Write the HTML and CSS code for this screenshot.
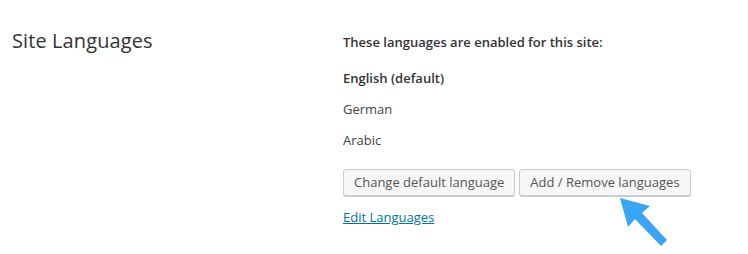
FILE: index.html
```html
<!DOCTYPE html>
<html>
<head>
<meta charset="utf-8">
<link rel="stylesheet" href="styles.css">
</head>
<body>
<div class="row">
  <h2 class="label">Site Languages</h2>
  <div class="field">
    <p class="intro">These languages are enabled for this site:</p>
    <ul class="langs">
      <li class="default">English (default)</li>
      <li>German</li>
      <li>Arabic</li>
    </ul>
    <div class="buttons">
      <button class="btn">Change default language</button>
      <button class="btn">Add / Remove languages</button>
    </div>
    <a class="edit" href="#">Edit Languages</a>
  </div>
</div>
<svg class="arrow" width="60" height="60" viewBox="0 0 60 60">
  <polygon points="1,1 31,9 23,16 48,43 42,49 16,22 9,30" fill="#3ba5f5"/>
</svg>
</body>
</html>
```
FILE: styles.css
```css
html, body {
  margin: 0;
  padding: 0;
  background: #fff;
  font-family: "Open Sans", sans-serif;
  color: #444;
}
.row {
  display: grid;
  grid-template-columns: 331px 1fr;
  padding: 28px 0 0 12px;
}
.label {
  margin: 0;
  font-size: 20px;
  font-weight: 400;
  line-height: 26px;
  color: #333;
  letter-spacing: 0.1px;
}
.field {
  font-size: 13px;
  padding-top: 5px;
}
.intro {
  margin: 0 0 18px;
  font-weight: 600;
  line-height: 18px;
  color: #333;
}
.langs {
  list-style: none;
  margin: 0;
  padding: 0;
}
.langs li {
  line-height: 18px;
  margin-bottom: 13px;
}
.langs li:last-child {
  margin-bottom: 0;
}
.langs li.default {
  font-weight: 600;
  color: #333;
}
.buttons {
  display: flex;
  gap: 4px;
  margin-top: 20px;
}
.btn {
  font-family: "Open Sans", sans-serif;
  font-size: 13px;
  color: #555;
  background: #f7f7f7;
  border: 1px solid #ccc;
  border-radius: 3px;
  box-shadow: 0 1px 0 #ccc;
  height: 27px;
  padding: 0 10px;
  line-height: 25px;
}
.edit {
  display: inline-block;
  margin-top: 12px;
  color: #0073aa;
  line-height: 18px;
}
.arrow {
  position: absolute;
  left: 619px;
  top: 197px;
}
```
